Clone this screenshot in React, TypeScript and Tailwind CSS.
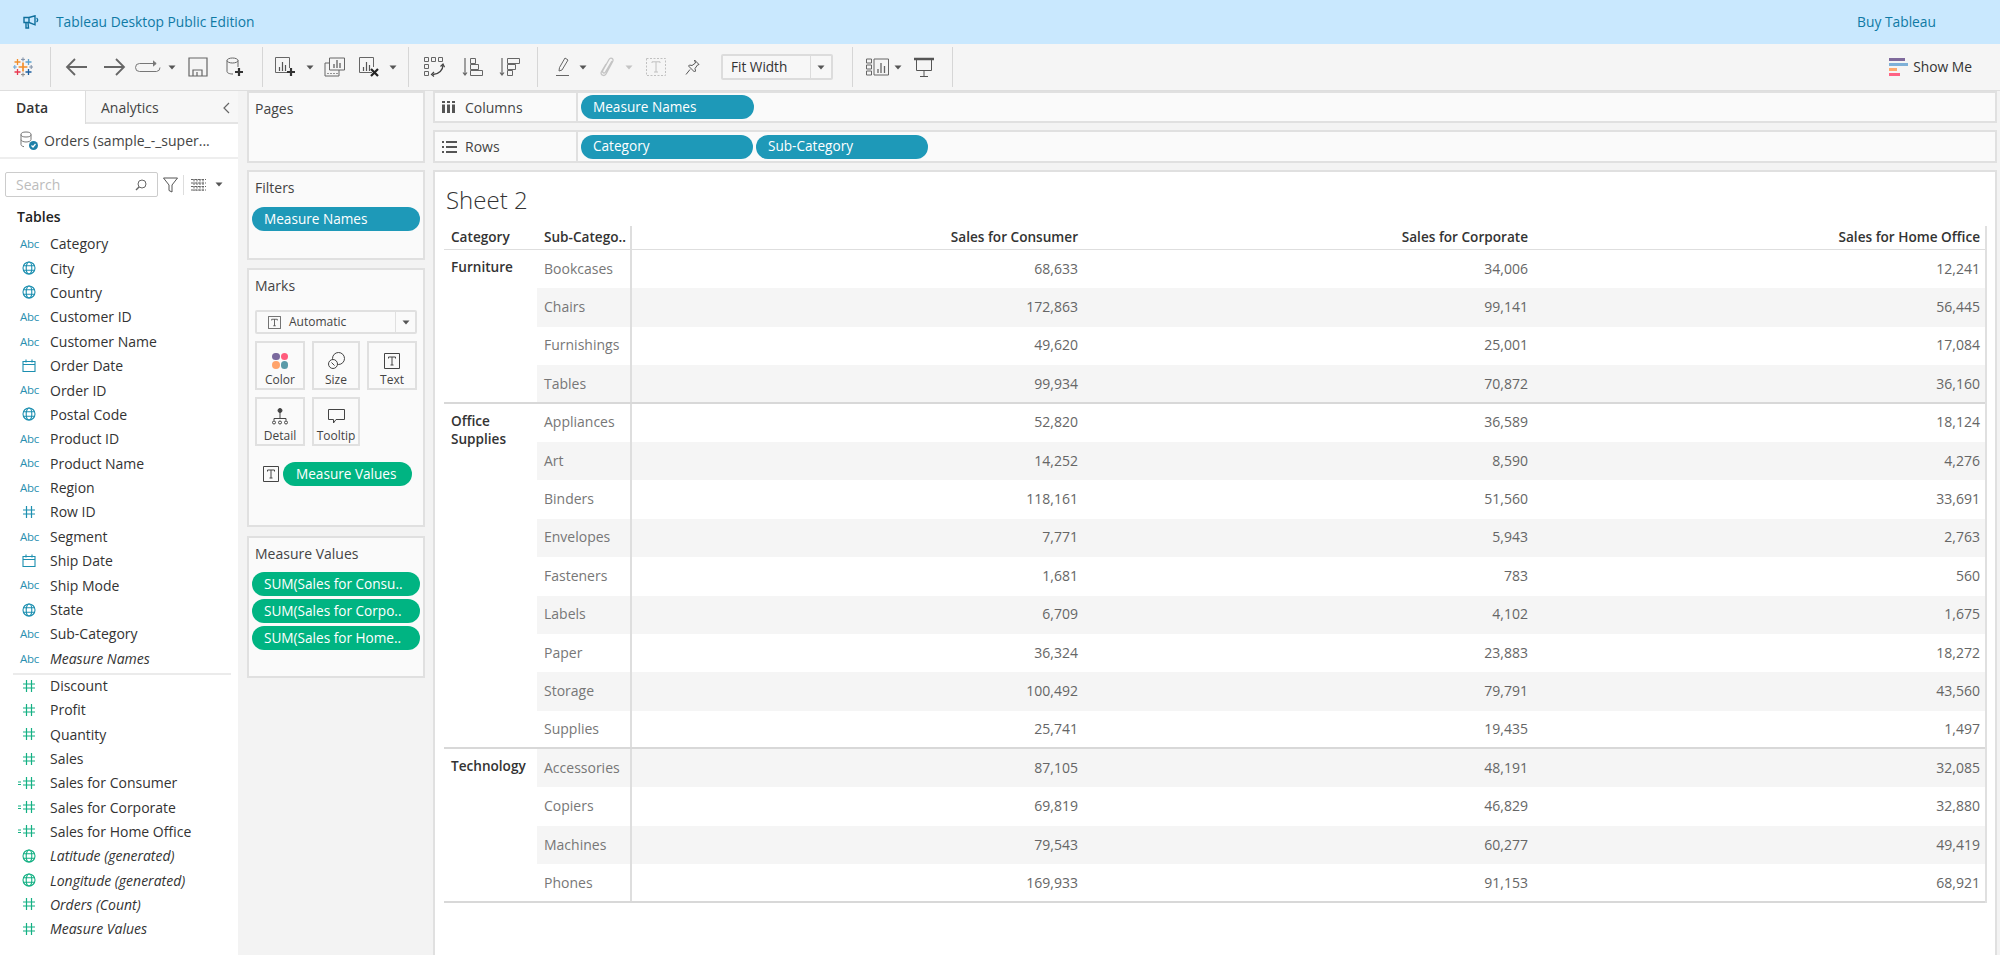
import { Fragment } from "react";

const font = { fontFamily: '"Open Sans", "Noto Sans", sans-serif' };

function Caret({ className = "ml-[8px]", color = "#555" }: { className?: string; color?: string }) {
  return (
    <svg className={`shrink-0 ${className}`} width="8" height="5" viewBox="0 0 8 5">
      <path d="M0.5 0.5h7L4 4.5z" fill={color} />
    </svg>
  );
}

function Sep({ className }: { className: string }) {
  return <div className={`w-px h-[40px] shrink-0 bg-[#d6d6d6] ${className}`} />;
}

function TableauLogo() {
  const crosses = [
    [10, 10, 4.4, "#f28e2b", 1.7],
    [4.5, 5, 3, "#f28e2b", 1.3],
    [15.5, 5, 3, "#5fa2ce", 1.3],
    [10, 2.4, 2, "#7f8fa6", 1],
    [1.8, 10, 2, "#6aa6d8", 1],
    [18.2, 10, 2, "#7f8fa6", 1],
    [4.5, 15, 3, "#e8384f", 1.3],
    [15.5, 15, 3, "#1f5f9e", 1.3],
    [10, 17.6, 2, "#8a8a8a", 1],
  ] as const;
  return (
    <svg className="ml-[13px] shrink-0" width="20" height="20" viewBox="0 0 20 20">
      {crosses.map(([x, y, r, c, w], i) => (
        <path key={i} d={`M${x - r} ${y}H${x + r}M${x} ${y - r}V${y + r}`} stroke={c} strokeWidth={w} />
      ))}
    </svg>
  );
}

function BarBox() {
  return <path d="M4.5 14v-4M7.5 14V5M10.5 14V8" stroke="#555" strokeWidth="1.2" />;
}

function Toolbar() {
  return (
    <div className="h-[47px] flex items-center bg-[#f5f5f5] border-b border-[#dedede] shrink-0">
      <TableauLogo />
      <Sep className="ml-[17px]" />
      <svg className="ml-[14px] shrink-0" width="24" height="20" viewBox="0 0 24 20" fill="none" stroke="#666" strokeWidth="1.8">
        <path d="M22 10H2M10 2l-8 8 8 8" />
      </svg>
      <svg className="ml-[13px] shrink-0" width="24" height="20" viewBox="0 0 24 20" fill="none" stroke="#666" strokeWidth="1.8">
        <path d="M2 10h20M14 2l8 8-8 8" />
      </svg>
      <svg className="ml-[9px] shrink-0" width="26" height="14" viewBox="0 0 26 14" fill="none" stroke="#777" strokeWidth="1">
        <path d="M19 3.5H4.5a4 4 0 0 0 0 8h17a4 4 0 0 0 3.5-4" />
        <path d="M18 .8l3.2 2.7L18 6.2" fill="#777" />
      </svg>
      <Caret className="ml-[7px]" />
      <svg className="ml-[12px] shrink-0" width="20" height="20" viewBox="0 0 20 20" fill="none" stroke="#666" strokeWidth="1.2">
        <path d="M1 1h18v18H1zM5 19v-6h9v6M9 15v4" />
      </svg>
      <svg className="ml-[18px] shrink-0" width="18" height="20" viewBox="0 0 18 20" fill="none" stroke="#666" strokeWidth="1">
        <ellipse cx="6.5" cy="3.5" rx="5.5" ry="2.5" />
        <path d="M1 3.5v11c0 1.5 2.5 2.5 6 2.5M12 3.5V10" />
        <path d="M13 11v8M9 15h8" stroke="#333" strokeWidth="2.2" />
      </svg>
      <Sep className="ml-[18px]" />
      <svg className="ml-[12px] shrink-0" width="22" height="20" viewBox="0 0 22 20" fill="none" stroke="#666" strokeWidth="1">
        <path d="M15 15.5H.5V.5h14V11" />
        <BarBox />
        <path d="M16 11v8M12 15h8" stroke="#333" strokeWidth="2.2" />
      </svg>
      <Caret className="ml-[9px]" />
      <svg className="ml-[10px] shrink-0" width="21" height="20" viewBox="0 0 21 20" fill="none" stroke="#666" strokeWidth="1">
        <path d="M5.5 1h15v12h-15zM5.5 6H1v13h14v-6" />
        <path d="M10 11V7M13 11V3M16 11V6M4 16v1M7 16v1M10 16v1M13 16v1" stroke="#555" strokeWidth="1.2" />
      </svg>
      <svg className="ml-[14px] shrink-0" width="22" height="20" viewBox="0 0 22 20" fill="none" stroke="#666" strokeWidth="1">
        <path d="M13 15.5H.5V.5h14V10" />
        <BarBox />
        <path d="M12 12l7 7M19 12l-7 7" stroke="#222" strokeWidth="2.2" />
      </svg>
      <Caret className="ml-[8px]" />
      <Sep className="ml-[11px]" />
      <svg className="ml-[15px] shrink-0" width="21" height="20" viewBox="0 0 21 20" fill="none" stroke="#666" strokeWidth="1">
        <path d="M.5.5h4v4h-4zM7.5.5h4v4h-4zM14.5.5h4v4h-4zM.5 7.5h4v4h-4zM.5 14.5h4v4h-4z" />
        <path d="M19 8c0 5-4 9-10 9.5" strokeWidth="1.3" stroke="#444" />
        <path d="M16.5 9.5L19 7l1.5 3.2M10 15l-2.5 2.5 2.5 2" strokeWidth="1.2" stroke="#444" />
      </svg>
      <svg className="ml-[17px] shrink-0" width="21" height="20" viewBox="0 0 21 20" fill="none" stroke="#666" strokeWidth="1">
        <path d="M8.5 1.5h5v5h-5zM8.5 7.5h8v5h-8zM8.5 13.5h12v5h-12z" />
        <path d="M3 1v17M1 15.5L3 18l2-2.5" strokeWidth="1.2" />
      </svg>
      <svg className="ml-[16px] shrink-0" width="21" height="20" viewBox="0 0 21 20" fill="none" stroke="#666" strokeWidth="1">
        <path d="M8.5 1.5h12v5h-12zM8.5 7.5h8v5h-8zM8.5 13.5h5v5h-5z" />
        <path d="M3 1v17M1 15.5L3 18l2-2.5" strokeWidth="1.2" />
      </svg>
      <Sep className="ml-[17px]" />
      <svg className="ml-[18px] shrink-0" width="14" height="20" viewBox="0 0 14 20" fill="none" stroke="#666" strokeWidth="1">
        <path d="M9 1l3 2-6 10-3 1 .5-3.5zM0 18.5h13" />
      </svg>
      <Caret className="ml-[9px]" />
      <svg className="ml-[13px] shrink-0" width="15" height="20" viewBox="0 0 15 20" fill="none" stroke="#c4c4c4" strokeWidth="1.3">
        <path d="M12 4L5.500 15c-1 1.800-3.500.8-2.800-1.200L9 2.500c1.500-2.500 5-1 3.800 1.600L6 17c-1.500 2.800-6 1-4.700-2L6 7" />
      </svg>
      <Caret className="ml-[10px]" color="#c4c4c4" />
      <svg className="ml-[13px] shrink-0" width="20" height="18" viewBox="0 0 20 18" fill="none" stroke="#c0c0c0" strokeWidth="1">
        <path d="M.5.5h19v17H.5z" strokeDasharray="2 1.5" />
        <path d="M6 5V3.8h8V5M10 4v10M8 14h4" />
      </svg>
      <svg className="ml-[19px] shrink-0" width="15" height="17" viewBox="0 0 15 17" fill="none" stroke="#555" strokeWidth="1">
        <path d="M9.500 1l4.500 4.500-1.500.5-2.500 3.500.5 2.500-1 1-3-3-3-3 1-1 2.500.5 3.500-2.500zM5 10.500L1 15.500" />
      </svg>
      <div className="ml-[21px] w-[112px] h-[26px] flex items-center bg-[#f7f7f7] border-2 border-[#dcdcdc] rounded-[2px] shrink-0">
        <span className="pl-[8px] flex-1 text-[13.6px] text-[#333]">Fit Width</span>
        <div className="w-[21px] h-full border-l border-[#dcdcdc] flex items-center justify-center">
          <Caret className="" />
        </div>
      </div>
      <Sep className="ml-[19px]" />
      <svg className="ml-[13px] shrink-0" width="23" height="18" viewBox="0 0 23 18" fill="none" stroke="#666" strokeWidth="1">
        <path d="M.5 1h5v4h-5zM.5 7h5v4h-5zM.5 13h5v4h-5zM8 1h14.500v16H8z" />
        <path d="M12 15v-4M15 15V5M18.500 15V8" strokeWidth="1.3" />
      </svg>
      <Caret className="ml-[5px]" />
      <svg className="ml-[12px] shrink-0" width="20" height="20" viewBox="0 0 20 20" fill="none" stroke="#555" strokeWidth="1">
        <path d="M0 2h20" strokeWidth="2.5" />
        <path d="M2.500 3v10.500h15V3M10 14v5M6 19.500h8" />
      </svg>
      <Sep className="ml-[18px]" />
      <div className="ml-auto mr-[28px] flex items-center">
        <div className="w-[19px] flex flex-col gap-[1.5px]">
          <div className="h-[3.5px] w-[16px] bg-[#7f6a9c]" />
          <div className="h-[3.5px] w-[19px] bg-[#7fb1d8]" />
          <div className="h-[3.5px] w-[8px] bg-[#ffa96e]" />
          <div className="h-[3.5px] w-[11px] bg-[#ff6384]" />
        </div>
        <span className="ml-[5px] text-[13.8px] text-[#333]">Show Me</span>
      </div>
    </div>
  );
}

function FieldIcon({ type, green }: { type: string; green: boolean }) {
  const c = green ? "#13b083" : "#1c8fb0";
  if (type === "abc") {
    return <span className="w-[18px] text-[11.5px] font-medium leading-none text-[#2a8fb0] tracking-[-0.3px]">Abc</span>;
  }
  if (type === "geo") {
    return (
      <svg width="14" height="14" viewBox="0 0 14 14" fill="none" stroke={c} strokeWidth="1.1" className="ml-[2px]">
        <circle cx="7" cy="7" r="6" />
        <ellipse cx="7" cy="7" rx="2.8" ry="6" />
        <path d="M1.500 4.800h11M1.500 9.200h11" />
      </svg>
    );
  }
  if (type === "date") {
    return (
      <svg width="14" height="13" viewBox="0 0 14 13" fill="none" stroke={c} strokeWidth="1.1" className="ml-[2px]">
        <path d="M1 2.500h12v10H1zM1 5.500h12M4 .5v3M10 .5v3" />
      </svg>
    );
  }
  return (
    <svg width="18" height="12" viewBox="0 0 18 12" fill="none" stroke={c} strokeWidth="1.2" className="overflow-visible">
      {type === "calc" && <path d="M-2 5h3M-2 7.500h3" strokeWidth="1" />}
      <path d="M6.500 0v12M11.500 0v12M3 4h12M3 8h12" />
    </svg>
  );
}

function Field({ name, type, green = false, italic = false, h = "h-[24.4px]" }: { name: string; type: string; green?: boolean; italic?: boolean; h?: string }) {
  return (
    <div className={`${h} flex items-center pl-[20px]`}>
      <div className="w-[30px] flex items-center shrink-0">
        <FieldIcon type={type} green={green} />
      </div>
      <span className={`text-[14px] text-[#333] whitespace-nowrap ${italic ? "italic" : ""}`}>{name}</span>
    </div>
  );
}

const dims = [
  ["Category", "abc"], ["City", "geo"], ["Country", "geo"], ["Customer ID", "abc"], ["Customer Name", "abc"],
  ["Order Date", "date"], ["Order ID", "abc"], ["Postal Code", "geo"], ["Product ID", "abc"], ["Product Name", "abc"],
  ["Region", "abc"], ["Row ID", "hash"], ["Segment", "abc"], ["Ship Date", "date"], ["Ship Mode", "abc"],
  ["State", "geo"], ["Sub-Category", "abc"],
];

const measures = [
  ["Discount", "hash"], ["Profit", "hash"], ["Quantity", "hash"], ["Sales", "hash"],
  ["Sales for Consumer", "calc"], ["Sales for Corporate", "calc"], ["Sales for Home Office", "calc"],
];

const generated = [
  ["Latitude (generated)", "geo"], ["Longitude (generated)", "geo"], ["Orders (Count)", "hash"], ["Measure Values", "hash"],
];

function DataPanel() {
  return (
    <div className="w-[238px] shrink-0 bg-white h-full overflow-hidden">
      <div className="h-[33px] flex">
        <div className="w-[86px] flex items-center pl-[16px] text-[14px] font-semibold text-[#333] border-r border-[#dcdcdc]">Data</div>
        <div className="flex-1 flex items-center pl-[15px] pt-[2px] text-[14px] text-[#444] bg-[#f7f7f7] border-b-2 border-[#e4e4e4]">
          <span className="flex-1">Analytics</span>
          <svg className="mr-[8px]" width="7" height="12" viewBox="0 0 7 12" fill="none" stroke="#666" strokeWidth="1.2">
            <path d="M6 1L1 6l5 5" />
          </svg>
        </div>
      </div>
      <div className="h-[35px] flex items-center pl-[19px] border-b-2 border-[#eeeeee]">
        <svg width="20" height="20" viewBox="0 0 20 20" fill="none" stroke="#777" strokeWidth="1">
          <ellipse cx="7" cy="3.5" rx="5" ry="2.5" />
          <path d="M2 3.500v5c0 1.400 2.300 2.500 5 2.500s5-1 5-2.500v-5M2 8.500v5c0 1 1 1.800 3 2.200" />
          <circle cx="14.5" cy="14.5" r="4.5" fill="#1f80a8" stroke="none" />
          <path d="M12.500 14.500l1.500 1.500 2.500-3" stroke="#fff" strokeWidth="1.2" />
        </svg>
        <span className="ml-[5px] text-[14px] text-[#444] whitespace-nowrap">Orders (sample_-_super...</span>
      </div>
      <div className="mt-[13px] flex items-center">
        <div className="ml-[5px] w-[153px] h-[25px] flex items-center border border-[#cccccc] rounded-[2px] px-[10px]">
          <span className="flex-1 text-[14px] text-[#bcbcbc]">Search</span>
          <svg width="12" height="12" viewBox="0 0 12 12" fill="none" stroke="#666" strokeWidth="1">
            <circle cx="7" cy="5" r="4" />
            <path d="M4 8L1 11" strokeWidth="1.4" />
          </svg>
        </div>
        <svg className="ml-[5px]" width="15" height="16" viewBox="0 0 15 16" fill="none" stroke="#555" strokeWidth="1">
          <path d="M.5 1h14L9 8v7l-3-1.500V8z" />
        </svg>
        <div className="ml-[5px] w-px h-[20px] bg-[#dddddd]" />
        <svg className="ml-[7px]" width="15" height="12" viewBox="0 0 15 12" fill="none" stroke="#666" strokeWidth="1">
          <path d="M0 .5h15M0 4h15M0 7.500h15M0 11h15M3 0v12M6 0v12M9 0v12M12 0v12" strokeDasharray="2.5 1" />
        </svg>
        <Caret className="ml-[9px]" />
      </div>
      <div className="mt-[9px] h-[20px] flex items-center pl-[17px] text-[14px] font-semibold text-[#222]">Tables</div>
      <div className="pt-[5.5px]">
        {dims.map(([n, t]) => (
          <Field key={n} name={n} type={t} />
        ))}
        <Field name="Measure Names" type="abc" italic />
      </div>
      <div className="mt-[2px] ml-[13px] mr-[7px] h-[2px] bg-[#ebebeb]" />
      <div className="-mt-[1px]">
        {measures.map(([n, t]) => (
          <Field key={n} name={n} type={t} green h="h-[24.3px]" />
        ))}
        {generated.map(([n, t]) => (
          <Field key={n} name={n} type={t} green italic h="h-[24.3px]" />
        ))}
      </div>
    </div>
  );
}

function Pill({ children, green = false, className = "" }: { children: string; green?: boolean; className?: string }) {
  return (
    <div className={`h-[24px] rounded-full flex items-center pl-[12px] text-[13.6px] text-white whitespace-nowrap overflow-hidden ${green ? "bg-[#00b482]" : "bg-[#1e99b8]"} ${className}`}>
      {children}
    </div>
  );
}

function TextIcon({ size = 16 }: { size?: number }) {
  return (
    <svg width={size} height={size} viewBox="0 0 16 16" fill="none" stroke="#444" strokeWidth="1">
      <path d="M.5.5h15v15H.5zM4.500 5.500V4h7v1.500M8 4v8M6.500 12h3" />
    </svg>
  );
}

function MarkButton({ label, children }: { label: string; children: React.ReactNode }) {
  return (
    <div className="h-[49px] border-2 border-[#e0e0e0] flex flex-col items-center">
      <div className="h-[29px] pt-[6px] flex items-center justify-center">{children}</div>
      <span className="mt-[1px] text-[12px] leading-[14px] text-[#444]">{label}</span>
    </div>
  );
}

function Card({ className, children }: { className: string; children?: React.ReactNode }) {
  return <div className={`shrink-0 bg-[#fafafa] border-2 border-[#e0e0e0] ${className}`}>{children}</div>;
}

function CardLabel({ children }: { children: string }) {
  return <div className="h-[20px] flex items-center pl-[6px] text-[14px] text-[#444]">{children}</div>;
}

function CardsColumn() {
  return (
    <div className="ml-[9px] w-[178px] shrink-0 flex flex-col">
      <Card className="h-[72px] pt-[5px]">
        <CardLabel>Pages</CardLabel>
      </Card>
      <Card className="mt-[7px] h-[90px] pt-[5px]">
        <CardLabel>Filters</CardLabel>
        <Pill className="mt-[10px] mx-[3px]">Measure Names</Pill>
      </Card>
      <Card className="mt-[8px] h-[259px] pt-[5px]">
        <CardLabel>Marks</CardLabel>
        <div className="mt-[15px] mx-[6px] w-[162px] h-[24px] flex items-center border-2 border-[#e0e0e0] rounded-[2px]">
          <div className="pl-[11px]">
            <TextIcon size={13} />
          </div>
          <span className="ml-[8px] flex-1 text-[12px] text-[#444]">Automatic</span>
          <div className="w-[20px] h-full border-l border-[#e0e0e0] flex items-center justify-center">
            <Caret className="" />
          </div>
        </div>
        <div className="mt-[7px] ml-[6px] grid grid-cols-[50px_48px_50px] gap-x-[7px] gap-y-[7px]">
          <MarkButton label="Color">
            <div className="grid grid-cols-2 gap-[1px]">
              <div className="w-[7.5px] h-[7.5px] rounded-full bg-[#7b6a9e]" />
              <div className="w-[7.5px] h-[7.5px] rounded-full bg-[#ff5c7c]" />
              <div className="w-[7.5px] h-[7.5px] rounded-full bg-[#ffa36a]" />
              <div className="w-[7.5px] h-[7.5px] rounded-full bg-[#5a9aa8]" />
            </div>
          </MarkButton>
          <MarkButton label="Size">
            <svg width="17" height="17" viewBox="0 0 17 17" fill="none" stroke="#444" strokeWidth="1">
              <circle cx="10.5" cy="6.5" r="6" />
              <circle cx="5" cy="12" r="4.5" fill="#fafafa" />
              <path d="M3.500 10.500l3 3" />
            </svg>
          </MarkButton>
          <MarkButton label="Text">
            <TextIcon />
          </MarkButton>
          <MarkButton label="Detail">
            <svg width="16" height="17" viewBox="0 0 16 17" fill="none" stroke="#444" strokeWidth="1">
              <circle cx="8" cy="2.5" r="2" fill="#444" />
              <path d="M8 4.500v6M2 12.500v-2h12v2" />
              <circle cx="2" cy="14.5" r="1.5" />
              <circle cx="8" cy="14.5" r="1.5" />
              <circle cx="14" cy="14.5" r="1.5" />
            </svg>
          </MarkButton>
          <MarkButton label="Tooltip">
            <svg width="17" height="15" viewBox="0 0 17 15" fill="none" stroke="#444" strokeWidth="1">
              <path d="M.5.500h16v10H8L5.500 14v-3.500h-5z" />
            </svg>
          </MarkButton>
        </div>
        <div className="mt-[16px] flex items-center pl-[14px]">
          <TextIcon />
          <Pill green className="ml-[4px] w-[129px] pl-[13px]">Measure Values</Pill>
        </div>
      </Card>
      <Card className="mt-[9px] h-[142px] pt-[5px]">
        <CardLabel>Measure Values</CardLabel>
        <div className="mt-[9px] mx-[3px] flex flex-col gap-[3px]">
          <Pill green>SUM(Sales for Consu..</Pill>
          <Pill green>SUM(Sales for Corpo..</Pill>
          <Pill green>SUM(Sales for Home..</Pill>
        </div>
      </Card>
    </div>
  );
}

function Shelf({ label, icon, className, children }: { label: string; icon: React.ReactNode; className: string; children: React.ReactNode }) {
  return (
    <div className={`bg-[#fafafa] border-2 border-[#e0e0e0] flex shrink-0 ${className}`}>
      <div className="w-[143px] shrink-0 flex items-center pl-[7px] border-r-2 border-[#e0e0e0] text-[14px] text-[#444]">
        <div className="w-[16px]">{icon}</div>
        <span className="ml-[7px]">{label}</span>
      </div>
      <div className="flex items-center pl-[3px] gap-[3px]">{children}</div>
    </div>
  );
}

type Row = { sub: string; a: string; b: string; c: string };

const groups: { name: string[]; rows: Row[] }[] = [
  {
    name: ["Furniture"],
    rows: [
      { sub: "Bookcases", a: "68,633", b: "34,006", c: "12,241" },
      { sub: "Chairs", a: "172,863", b: "99,141", c: "56,445" },
      { sub: "Furnishings", a: "49,620", b: "25,001", c: "17,084" },
      { sub: "Tables", a: "99,934", b: "70,872", c: "36,160" },
    ],
  },
  {
    name: ["Office", "Supplies"],
    rows: [
      { sub: "Appliances", a: "52,820", b: "36,589", c: "18,124" },
      { sub: "Art", a: "14,252", b: "8,590", c: "4,276" },
      { sub: "Binders", a: "118,161", b: "51,560", c: "33,691" },
      { sub: "Envelopes", a: "7,771", b: "5,943", c: "2,763" },
      { sub: "Fasteners", a: "1,681", b: "783", c: "560" },
      { sub: "Labels", a: "6,709", b: "4,102", c: "1,675" },
      { sub: "Paper", a: "36,324", b: "23,883", c: "18,272" },
      { sub: "Storage", a: "100,492", b: "79,791", c: "43,560" },
      { sub: "Supplies", a: "25,741", b: "19,435", c: "1,497" },
    ],
  },
  {
    name: ["Technology"],
    rows: [
      { sub: "Accessories", a: "87,105", b: "48,191", c: "32,085" },
      { sub: "Copiers", a: "69,819", b: "46,829", c: "32,880" },
      { sub: "Machines", a: "79,543", b: "60,277", c: "49,419" },
      { sub: "Phones", a: "169,933", b: "91,153", c: "68,921" },
    ],
  },
];

function SheetTable() {
  let idx = 0;
  return (
    <div className="w-[1543px] border-r-2 border-[#e0e0e0]">
      <div className="h-[24px] flex border-b border-[#dedede] text-[13.6px] font-semibold text-[#333]">
        <div className="w-[93px] pl-[7px] flex items-center">Category</div>
        <div className="w-[95px] pl-[7px] flex items-center border-r-2 border-[#dedede] whitespace-nowrap overflow-hidden">Sub-Catego..</div>
        <div className="w-[451px] pr-[5px] flex items-center justify-end">Sales for Consumer</div>
        <div className="w-[450px] pr-[5px] flex items-center justify-end">Sales for Corporate</div>
        <div className="flex-1 pr-[5px] flex items-center justify-end">Sales for Home Office</div>
      </div>
      {groups.map((g) => (
        <Fragment key={g.name[0]}>
          <div className="flex">
            <div className="w-[93px] shrink-0 pt-[8px] pl-[7px] text-[13.6px] leading-[18.5px] font-semibold text-[#333]">
              {g.name.map((l) => (
                <div key={l}>{l}</div>
              ))}
            </div>
            <div className="flex-1">
              {g.rows.map((r) => {
                const odd = idx++ % 2 === 1;
                return (
                  <div key={r.sub} className={`h-[38.4px] flex items-center text-[14px] text-[#666] ${odd ? "bg-[#f5f5f5]" : "bg-white"}`}>
                    <div className="w-[95px] h-full pl-[7px] pb-[2px] flex items-center border-r-2 border-[#dedede] text-[#777]">{r.sub}</div>
                    <div className="w-[451px] pr-[5px] pb-[2px] text-right">{r.a}</div>
                    <div className="w-[450px] pr-[5px] pb-[2px] text-right">{r.b}</div>
                    <div className="flex-1 pr-[5px] pb-[2px] text-right">{r.c}</div>
                  </div>
                );
              })}
            </div>
          </div>
          <div className="relative h-[2px] -mt-[2px] bg-[#d8d8d8]" />
        </Fragment>
      ))}
    </div>
  );
}

export default function App() {
  return (
    <div className="w-full h-screen overflow-hidden flex flex-col bg-[#f3f3f3]" style={font}>
      <div className="h-[44px] shrink-0 flex items-center bg-[#c9e8fe] pl-[23px] pr-[64px] text-[13.8px] text-[#0f7aa5]">
        <svg width="16" height="14" viewBox="0 0 16 14" fill="none" stroke="#0f6f9c" strokeWidth="1.4">
          <path d="M1 2.500h5v5H1zM6 2.500L12 .8v9L6 7.500zM3 7.500V13h2.500L5 7.500M13.500 3c1.500 1 1.500 3 0 4" />
        </svg>
        <span className="ml-[17px] flex-1">Tableau Desktop Public Edition</span>
        <span>Buy Tableau</span>
      </div>
      <Toolbar />
      <div className="flex-1 flex min-h-0">
        <DataPanel />
        <CardsColumn />
        <div className="ml-[8px] w-[1564px] shrink-0 flex flex-col">
          <Shelf
            label="Columns"
            className="h-[32px]"
            icon={
              <svg width="13" height="12" viewBox="0 0 13 12" fill="#555">
                <path d="M0 0h3v2H0zM0 3.500h3V12H0zM5 0h3v2H5zM5 3.500h3V12H5zM10 0h3v2h-3zM10 3.500h3V12h-3z" />
              </svg>
            }
          >
            <Pill className="w-[173px]">Measure Names</Pill>
          </Shelf>
          <Shelf
            label="Rows"
            className="mt-[7px] h-[33px]"
            icon={
              <svg width="15" height="12" viewBox="0 0 15 12" fill="#555">
                <path d="M0 0h2v2H0zM4 0h11v2H4zM0 5h2v2H0zM4 5h11v2H4zM0 10h2v2H0zM4 10h11v2H4z" />
              </svg>
            }
          >
            <Pill className="w-[172px]">Category</Pill>
            <Pill className="w-[172px]">Sub-Category</Pill>
          </Shelf>
          <div className="mt-[7px] flex-1 bg-white border-2 border-b-0 border-[#e0e0e0] pl-[9px]">
            <div className="h-[54px] flex items-center pl-[2px] pt-[2px] text-[24px] font-light text-[#333]">Sheet 2</div>
            <SheetTable />
          </div>
        </div>
      </div>
    </div>
  );
}
